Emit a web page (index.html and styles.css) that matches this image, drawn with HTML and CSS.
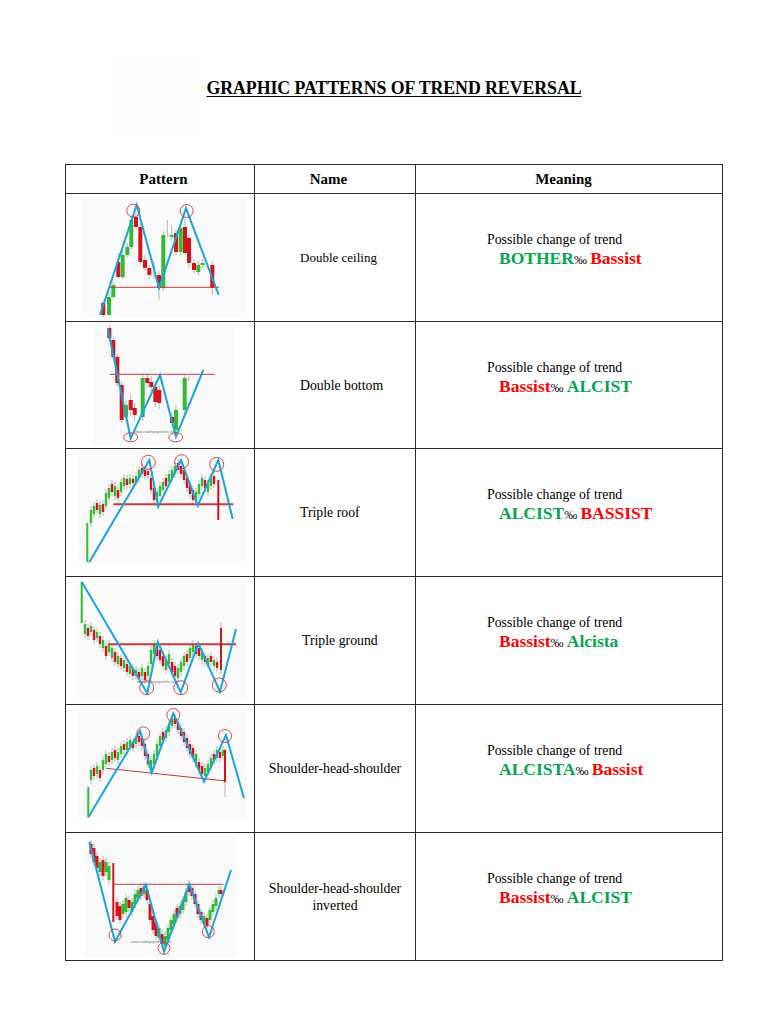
FILE: index.html
```html
<!DOCTYPE html>
<html lang="en">
<head>
<meta charset="utf-8">
<title>Graphic patterns of trend reversal</title>
<link rel="stylesheet" href="styles.css">
</head>
<body>
<div class="page">
  <div class="head">
    <div class="ghost"></div>
    <h1 class="title">GRAPHIC PATTERNS OF TREND REVERSAL</h1>
  </div>
  <div class="grid">
    <div class="cell th th-pattern">Pattern</div>
    <div class="cell th th-name">Name</div>
    <div class="cell th th-meaning">Meaning</div>

    <!-- Row 1: Double ceiling -->
    <div class="cell chart">
      <svg width="188" height="127" viewBox="1 1 188 127">
        <rect class="bg" x="16" y="3" width="166" height="121"/>
        <path class="wk" d="M38.3 108V124M44 100V122M48.3 88V106M53.3 60V86M57.7 58V86M62.3 50V64M66.3 22V56M71 20V36M75.3 30V72M80 62V78M84.3 72V86M89 68V86M94 78V107M98.3 38V98M102.3 27V44M106.7 32V48M111 36V62M115.7 30V62M120 25V62M124 42V75M129 66V80M133.3 68V82M137.7 66V75M147.3 68V102"/>
        <path class="cg w4" d="M44 104V122M48.3 92V104M57.7 62V84M62.3 54V62M66.3 27V54M98.3 42V95M106.7 42V44M115.7 35V59M133.3 72V79M137.7 70V72"/>
        <path class="cr w4" d="M38.3 110V122M53.3 69V84M71 24V34M75.3 34V69M80 67V75M84.3 75V82M94 82V95M111 40V59M120 34V60M124 45V70M129 70V77M147.3 72V95"/>
        <path class="neck thin" d="M45 94.3H154"/>
        <polyline class="bl" points="35,122 71.7,12 94,94.7 121,15.3 153.7,102"/>
        <circle class="ring" cx="68.3" cy="17.7" r="6.5"/>
        <circle class="ring" cx="121.7" cy="18" r="6.5"/>
      </svg>
    </div>
    <div class="cell name left small">Double ceiling</div>
    <div class="cell meaning">
      <p class="lead">Possible change of trend</p>
      <p class="verdict"><span class="up">BOTHER</span><span class="per">‰ </span><span class="down">Bassist</span></p>
    </div>

    <!-- Row 2: Double bottom -->
    <div class="cell chart">
      <svg width="188" height="127" viewBox="1 1 188 127">
        <rect class="bg" x="28" y="2" width="140" height="122"/>
        <path class="wk" d="M44.3 4V20M48.3 16V38M52.3 33V65M56.7 60V102M61 80V100M65.7 74V95M69.7 82V100M77.7 52V100M82.3 52V66M86.3 55V70M90.3 60V86M94.3 64V88M107 92V106M111 84V112M119.7 54V92M123.7 55V60"/>
        <path class="cg w4" d="M61 84V96M77.7 57V96M111 89V109M119.7 57V89"/>
        <path class="cr w4" d="M44.3 7V17M48.3 19V36M52.3 36V62M56.7 64V99M65.7 79V89M69.7 87V94M82.3 57V62M86.3 61V66M90.3 66V81M94.3 69V82M107 96V102"/>
        <path class="neck thin" d="M45 53.3H150"/>
        <text class="wm" x="70" y="111.5">www.tradingsgonline.com</text>
        <polyline class="bl" points="42.7,7.3 65.7,117.3 95,54 111,115.7 138.3,49"/>
        <ellipse class="ring" cx="65.7" cy="116.3" rx="7" ry="4.5"/>
        <ellipse class="ring" cx="110.7" cy="116.3" rx="7" ry="4.5"/>
      </svg>
    </div>
    <div class="cell name left">Double bottom</div>
    <div class="cell meaning">
      <p class="lead">Possible change of trend</p>
      <p class="verdict"><span class="down">Bassist</span><span class="per">‰ </span><span class="up">ALCIST</span></p>
    </div>

    <!-- Row 3: Triple roof -->
    <div class="cell chart">
      <svg width="188" height="127" viewBox="1 1 188 127">
        <rect class="bg" x="13" y="2" width="169" height="113"/>
        <path class="wk" d="M26 58V79M29 54V70M32 51V66M35 53V70M38 52V68M41 41V62M44 36V54M47 32V48M50 34V52M53 38V54M56 30V48M59 26V42M62 27V41M65 26V40M68 27V39M71 24V38M74 18V34M77 16V30M80 18V32M83 19V31M86 26V46M89 36V56M92 40V58M95 34V52M98 30V46M101 26V42M104 22V38M107 18V34M110 14V30M113 11V26M116 14V30M119 18V36M122 26V44M125 32V50M128 38V56M131 40V58M134 32V50M137 26V42M140 28V44M143 32V48M146 26V42M149 24V40"/>
        <path class="cg w24" d="M26 62V75M29 58V66M35 57V66M41 45V58M44 40V50M50 38V48M56 34V44M59 30V38M65 30V36M71 28V34M74 22V30M92 44V54M95 38V48M98 34V42M104 26V34M107 22V30M110 18V26M131 44V54M134 36V46M137 30V38M143 36V44M146 30V38"/>
        <path class="cr w24" d="M32 55V62M38 56V64M47 36V44M53 42V50M62 31V37M68 31V35M77 20V26M80 22V28M83 23V27M86 30V42M89 40V52M101 30V38M113 15V22M116 18V26M119 22V32M122 30V40M125 36V46M128 42V52M140 32V40M149 28V36"/>
        <path class="cg w2" d="M22.3 75V114"/>
        <path class="neck thick" d="M48.3 56.3H168.3"/>
        <path class="cr w2" d="M153.3 32V72"/>
        <polyline class="bl" points="24.3,114.3 84.3,12 93.3,58.7 116,12 132.7,57.7 153.3,12 167.7,71"/>
        <circle class="ring" cx="83.3" cy="14.3" r="7"/>
        <circle class="ring" cx="116.7" cy="13.7" r="7"/>
        <circle class="ring" cx="151.7" cy="16.3" r="7"/>
      </svg>
    </div>
    <div class="cell name left">Triple roof</div>
    <div class="cell meaning">
      <p class="lead">Possible change of trend</p>
      <p class="verdict"><span class="up">ALCIST</span><span class="per">‰ </span><span class="down">BASSIST</span></p>
    </div>

    <!-- Row 4: Triple ground -->
    <div class="cell chart">
      <svg width="188" height="127" viewBox="1 1 188 127">
        <rect class="bg" x="10" y="2" width="172" height="120"/>
        <path class="wk" d="M20 44V62M23 48V64M26 46V60M29 50V68M32 52V66M35 56V72M38 60V76M41 66V84M44 64V80M47 68V86M50 72V90M53 76V92M56 78V94M59 80V96M62 84V100M65 86V102M68 88V104M71 90V104M74 92V106M77 88V104M80 92V108M83 86V104M86 70V92M89 64V82M92 66V84M95 70V88M98 76V94M101 80V98M104 74V92M107 82V100M110 86V104M113 88V106M116 82V100M119 76V94M122 74V90M125 68V86M128 64V80M131 66V82M134 68V84M137 72V88M140 76V90M143 78V92M146 76V90M149 80V94M152 82V96M156 46V98"/>
        <path class="cg w24" d="M20 48V58M26 50V56M32 56V62M38 64V72M44 68V76M47 72V82M53 80V88M59 84V92M65 90V98M71 94V100M77 92V100M83 90V100M86 74V88M89 68V78M101 84V94M104 78V88M113 92V102M116 86V96M119 80V90M125 72V82M128 68V76M137 76V84M143 82V88M149 84V90"/>
        <path class="cr w24" d="M23 52V60M29 54V64M35 60V68M41 70V80M50 76V86M56 82V90M62 88V96M68 92V100M74 96V102M80 96V104M92 70V80M95 74V84M98 80V90M107 86V96M110 90V100M122 78V86M131 70V78M134 72V80M140 80V86M146 80V86M152 86V92"/>
        <path class="cg w2" d="M16.7 6V47"/>
        <path class="neck thick" d="M43.3 68.3H171"/>
        <path class="cr w2" d="M156 52V94"/>
        <text class="wm" x="72" y="107">www.tradingsgonline.com</text>
        <polyline class="bl" points="16.7,5.7 82.3,117.3 92.7,65.7 115.7,116.3 133.3,67.3 155,115.7 171,53"/>
        <circle class="ring" cx="81.7" cy="111.7" r="7"/>
        <circle class="ring" cx="115.7" cy="111.7" r="7"/>
        <circle class="ring" cx="154.3" cy="109" r="7"/>
      </svg>
    </div>
    <div class="cell name left ground">Triple ground</div>
    <div class="cell meaning">
      <p class="lead">Possible change of trend</p>
      <p class="verdict"><span class="down">Bassist</span><span class="per">‰ </span><span class="up">Alcista</span></p>
    </div>

    <!-- Row 5: Shoulder-head-shoulder -->
    <div class="cell chart">
      <svg width="188" height="127" viewBox="1 1 188 127">
        <rect class="bg" x="13" y="2" width="169" height="112"/>
        <path class="wk" d="M26 62V80M29 60V76M32 58V74M35 62V78M38 52V70M41 46V64M44 48V62M47 44V60M50 42V58M53 44V60M56 38V54M59 36V50M62 34V50M65 32V46M68 34V48M71 30V44M74 28V42M77 30V46M80 36V56M83 46V64M86 52V70M89 46V64M92 36V56M95 28V46M98 24V40M101 22V38M104 16V32M107 10V26M110 10V24M113 14V30M116 20V36M119 24V42M122 30V48M125 36V54M128 40V58M131 46V64M134 54V70M137 58V74M140 60V76M143 56V72M146 50V66M149 46V60M152 42V58M155 44V58M158 42V56M160 44V93"/>
        <path class="cg w24" d="M26 66V76M32 62V70M38 56V66M41 50V60M47 48V56M53 48V56M56 42V50M62 38V46M65 36V42M71 34V40M86 56V66M89 50V60M92 40V52M95 32V42M101 26V34M104 20V28M107 14V22M131 50V60M140 64V72M143 60V68M146 54V62M152 46V54M158 46V52"/>
        <path class="cr w24" d="M29 64V72M35 66V74M44 52V58M50 46V54M59 40V46M68 38V44M74 32V38M77 34V42M80 40V52M83 50V60M98 28V36M110 14V20M113 18V26M116 24V32M119 28V38M122 34V44M125 40V50M128 44V54M134 58V66M137 62V70M149 50V56M155 48V54"/>
        <path class="cg w2" d="M23.3 83V113"/>
        <path class="neck thin" d="M41 64.3L161 77"/>
        <path class="cr w2" d="M160 46V78"/>
        <polyline class="bl" points="23.3,113.3 75,26.7 86.7,68.7 108.3,9.3 139,77.7 161,31 179,94.3"/>
        <circle class="ring" cx="78.3" cy="29.3" r="6.5"/>
        <circle class="ring" cx="108.3" cy="11" r="6.5"/>
        <circle class="ring" cx="160" cy="32" r="6.5"/>
      </svg>
    </div>
    <div class="cell name">Shoulder-head-shoulder</div>
    <div class="cell meaning">
      <p class="lead">Possible change of trend</p>
      <p class="verdict"><span class="up">ALCISTA</span><span class="per">‰ </span><span class="down">Bassist</span></p>
    </div>

    <!-- Row 6: Shoulder-head-shoulder inverted -->
    <div class="cell chart">
      <svg width="188" height="127" viewBox="1 1 188 127">
        <rect class="bg" x="20" y="3" width="152" height="122"/>
        <path class="wk" d="M26 8V26M29 12V34M32 20V40M35 26V44M38 24V48M41 26V44M44 30V52M52 66V88M55 70V92M58 68V86M61 62V84M64 64V80M67 66V84M70 58V76M73 54V70M76 52V68M79 50V66M82 54V72M85 68V92M88 80V102M91 86V108M94 92V110M97 98V116M100 100V118M103 92V112M106 84V102M109 78V96M112 72V90M115 70V86M118 64V82M121 56V74M124 48V64M127 52V68M130 58V76M133 68V86M136 76V92M139 80V96M142 82V98M145 74V92M148 68V84M151 62V78M154 54V66M156 54V66"/>
        <path class="cg w3" d="M35 30V40M41 30V40M44 34V48M58 72V82M61 66V80M67 70V80M70 62V72M73 58V66M79 54V62M94 96V106M100 104V114M103 96V108M106 88V98M109 82V92M115 74V82M118 68V78M121 60V70M139 84V92M145 78V88M148 72V80M151 66V74M154 58V62"/>
        <path class="cr w3" d="M26 12V22M29 16V30M32 24V36M38 28V44M52 70V84M55 74V88M64 68V76M76 56V64M82 58V68M85 72V88M88 84V98M91 90V104M97 102V112M112 76V86M124 52V60M127 56V64M130 62V72M133 72V82M136 80V88M142 86V94M156 58V62"/>
        <path class="neck thin" d="M48.3 52.3H158.3"/>
        <path class="cr w2" d="M48.3 31V90"/>
        <text class="wm" x="66" y="111">www.tradingsgonline.com</text>
        <polyline class="bl" points="24.3,9.7 50,109.7 81,53 99,119.7 124.3,52.3 144,105.3 166,38"/>
        <circle class="ring" cx="50" cy="103" r="6"/>
        <circle class="ring" cx="99" cy="116.3" r="6"/>
        <circle class="ring" cx="143.3" cy="99.7" r="6"/>
      </svg>
    </div>
    <div class="cell name">Shoulder-head-shoulder<br>inverted</div>
    <div class="cell meaning">
      <p class="lead">Possible change of trend</p>
      <p class="verdict"><span class="down">Bassist</span><span class="per">‰ </span><span class="up">ALCIST</span></p>
    </div>
  </div>
</div>
</body>
</html>
```

FILE: styles.css
```css
html, body {
  margin: 0;
  padding: 0;
  background: #ffffff;
}

body {
  font-family: "Liberation Serif", "Times New Roman", serif;
  color: #000000;
}

.page {
  width: 658px;
  padding-left: 65px;
}

.head {
  display: grid;
  height: 164px;
}

.ghost {
  grid-area: 1 / 1;
  justify-self: start;
  align-self: start;
  margin: 58px 0 0 52px;
  width: 83px;
  height: 74px;
  background: #fcfcfc;
}

.title {
  grid-area: 1 / 1;
  justify-self: center;
  align-self: start;
  margin: 78px 0 0 0;
  font-size: 17.8px;
  line-height: 20px;
  font-weight: bold;
  text-decoration: underline;
  text-underline-offset: 2px;
  letter-spacing: -0.05px;
}

.grid {
  display: grid;
  grid-template-columns: 189px 161px 307px;
  grid-template-rows: 29px 128px 127px repeat(4, 128px);
  border-left: 1px solid #2b2b2b;
  border-top: 1px solid #2b2b2b;
}

.cell {
  border-right: 1px solid #2b2b2b;
  border-bottom: 1px solid #2b2b2b;
  min-width: 0;
}

.th {
  display: flex;
  align-items: center;
  justify-content: center;
  font-weight: bold;
  font-size: 15px;
}

.th-pattern {
  padding-left: 7px;
}

.th-name {
  padding-right: 13px;
}

.th-meaning {
  padding-right: 11px;
}

.name {
  display: flex;
  align-items: center;
  justify-content: center;
  text-align: center;
  font-size: 13.8px;
  line-height: 17px;
}

.name.left {
  justify-content: flex-start;
  padding-left: 45px;
}

.name.ground {
  padding-left: 47px;
}

.name.small {
  font-size: 13px;
}

.meaning {
  padding: 36px 0 0 71px;
}

.meaning p {
  margin: 0;
}

.lead {
  font-size: 13.8px;
  line-height: 19px;
}

.verdict {
  padding-left: 12px;
  line-height: 19px;
  font-size: 17.5px;
  font-weight: bold;
  white-space: nowrap;
}

.up {
  color: #00a650;
}

.down {
  color: #ff0000;
}

.per {
  font-weight: normal;
  font-size: 13px;
  color: #222222;
}

.chart svg {
  display: block;
}

.bg {
  fill: #fafafa;
}

.wk {
  fill: none;
  stroke: #9a9a9a;
  stroke-width: 0.7;
}

.cg {
  fill: none;
  stroke: #33bb33;
}

.cr {
  fill: none;
  stroke: #d4141c;
}

.w4 { stroke-width: 4; }
.w3 { stroke-width: 3; }
.w24 { stroke-width: 2.4; }
.w2 { stroke-width: 2; }

.neck {
  fill: none;
  stroke: #c83a3a;
}

.neck.thin { stroke-width: 1; }
.neck.thick { stroke-width: 2; }

.bl {
  fill: none;
  stroke: #1ba3dc;
  stroke-width: 2;
  stroke-linejoin: miter;
}

.ring {
  fill: none;
  stroke: #c8383c;
  stroke-width: 0.9;
}

.wm {
  font-family: "Liberation Sans", Arial, sans-serif;
  font-size: 3.6px;
  fill: #777777;
}
```
